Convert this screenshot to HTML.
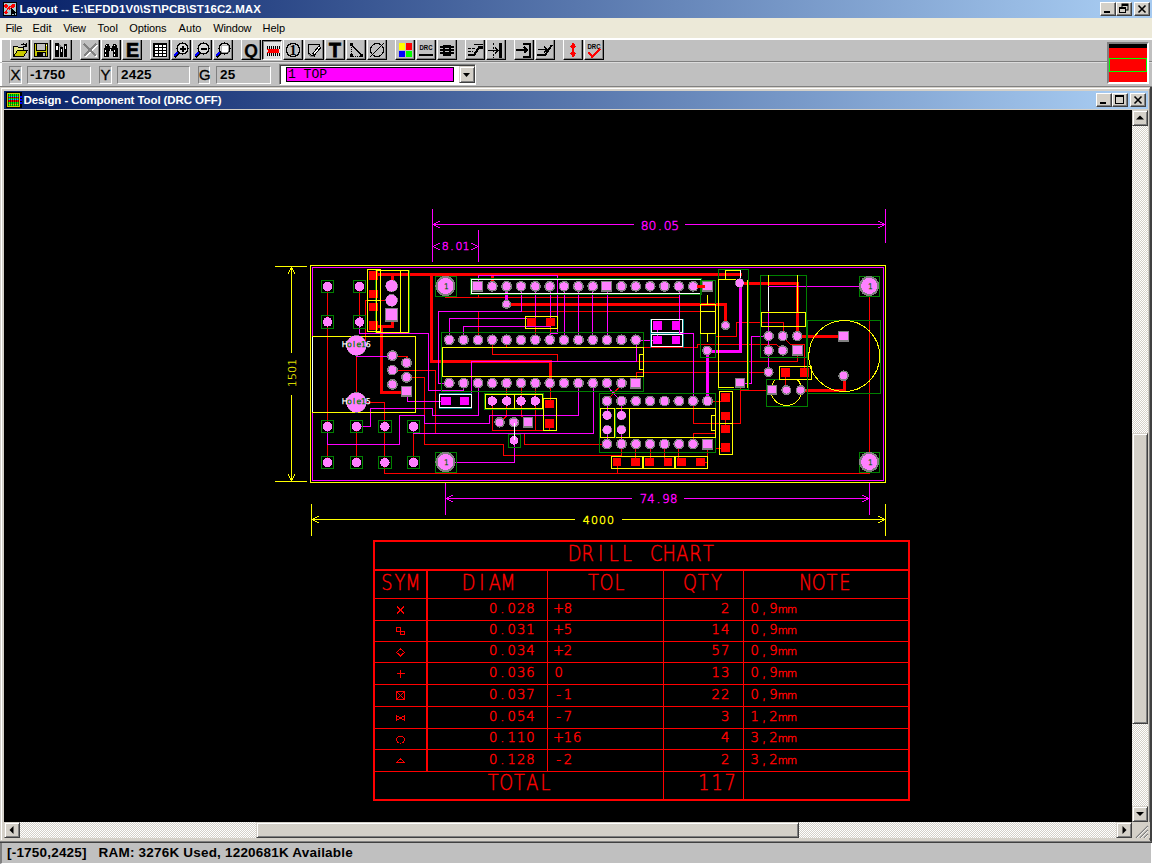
<!DOCTYPE html><html><head><meta charset="utf-8"><title>Layout</title><style>
*{box-sizing:border-box}
html,body{margin:0;padding:0}
body{width:1152px;height:864px;position:relative;overflow:hidden;background:#c0c0c0;font-family:"Liberation Sans",sans-serif;}
.abs{position:absolute}
#title{left:0;top:0;width:1152px;height:18px;background:linear-gradient(90deg,#0a246a 0%,#0a246a 3%,#a6caf0 97%,#a6caf0 100%)}
.ttext{position:absolute;color:#fff;font-weight:bold;font-size:11.5px;white-space:nowrap;line-height:14px}
.wb{position:absolute;width:16px;height:14px;background:#d4d0c8;border:1px solid;border-color:#fff #404040 #404040 #fff;box-shadow:inset -1px -1px 0 #808080}
.wb svg{position:absolute;left:0;top:0}
#menu{left:0;top:18px;width:1152px;height:20px;background:#ece9d8}
#menu span{position:absolute;top:3px;font-size:11px;color:#000;white-space:nowrap;line-height:14px}
#tbar{left:0;top:38px;width:1152px;height:24px;background:#c0c0c0;border-top:2px solid #fff;border-left:2px solid #fff}
.tb{position:absolute;top:40px;width:20px;height:20px;background:#c0c0c0;border-left:1px solid #fff;border-right:1px solid #000;border-bottom:1px solid #000;box-shadow:inset -1px -1px 0 #808080}
.tb.dn{background:#e0e0e0;border:none;border-left:1px solid #000;border-top:1px solid #000;border-right:1px solid #fff;border-bottom:1px solid #fff;box-shadow:inset 1px 1px 0 #808080}
.tb svg{position:absolute;left:-1px;top:0;shape-rendering:crispEdges}
.tb.dn svg{left:0;top:0}
#sep1{left:2px;top:61px;width:1150px;height:1px;background:#808080}
#sep1b{left:2px;top:62px;width:1150px;height:1px;background:#dcdcdc}
#cbar{left:0;top:63px;width:1152px;height:23px;background:#c0c0c0;border-left:2px solid #fff}
.sunk{position:absolute;top:66px;height:18px;border:1px solid;border-color:#808080 #fff #fff #808080;font-weight:bold;font-size:13.5px;letter-spacing:0.2px;line-height:16px;color:#000;white-space:nowrap}
#status{left:0;top:843px;width:1152px;height:21px;background:#c0c0c0;border-left:2px solid #808080;border-bottom:1px solid #fff;border-right:1px solid #fff}
#status span{position:absolute;left:5px;top:2px;font-weight:bold;font-size:13.5px;letter-spacing:0.2px;line-height:16px;white-space:pre;color:#000}
.sb{background-color:#fff;background-image:linear-gradient(45deg,#d4d0c8 25%,transparent 25%,transparent 75%,#d4d0c8 75%),linear-gradient(45deg,#d4d0c8 25%,transparent 25%,transparent 75%,#d4d0c8 75%);background-size:2px 2px;background-position:0 0,1px 1px}
.sbtn{position:absolute;background:#d4d0c8;border:1px solid;border-color:#d4d0c8 #404040 #404040 #d4d0c8;box-shadow:inset 1px 1px 0 #fff,inset -1px -1px 0 #808080}
</style></head><body>
<div id="title" class="abs"></div><svg class="abs" style="left:3px;top:2px" width="14" height="14" viewBox="0 0 14 14" shape-rendering="crispEdges"><rect x="0" y="0" width="14" height="14" fill="#000"/><rect x="1" y="1" width="12" height="12" fill="#a8c8d0"/><path d="M3,10 L6,5 L10,3" stroke="#ff0000" stroke-width="1" fill="none"/><circle cx="3" cy="4" r="1.8" fill="#ff0000"/><circle cx="10" cy="4" r="2" fill="#ff0000"/><circle cx="3" cy="10.5" r="1.8" fill="#ff0000"/><circle cx="6.5" cy="6.5" r="1.3" fill="#ff0000"/><path d="M8,6 v7 l2,-2 l1.5,2.5 l1,-0.5 l-1.5,-2.5 h2.5 z" fill="#000"/></svg><div class="ttext" id="t1" style="left:19.5px;top:2px;letter-spacing:0.1px">Layout -- E:\EFDD1V0\ST\PCB\ST16C2.MAX</div><div class="wb" style="left:1100px;top:2px"><svg width="14" height="12"><rect x="3" y="8" width="6" height="2" fill="#000"/></svg></div><div class="wb" style="left:1116px;top:2px"><svg width="14" height="12"><rect x="5" y="1" width="6" height="6" fill="none" stroke="#000"/><rect x="5" y="1" width="6" height="2" fill="#000"/><rect x="2.5" y="4.5" width="6" height="5" fill="#d4d0c8" stroke="#000"/><rect x="2" y="4" width="7" height="2" fill="#000"/></svg></div><div class="wb" style="left:1134px;top:2px"><svg width="14" height="12"><path d="M3.5,2.5 L10.5,9.5 M10.5,2.5 L3.5,9.5" stroke="#000" stroke-width="1.6"/></svg></div><div id="menu" class="abs"><span style="left:5.4px;letter-spacing:-0.28px">File</span><span style="left:32.4px;letter-spacing:0.1px">Edit</span><span style="left:63.2px;letter-spacing:-0.29px">View</span><span style="left:97.6px;letter-spacing:0.08px">Tool</span><span style="left:129.3px;letter-spacing:-0.12px">Options</span><span style="left:178.6px;letter-spacing:0.06px">Auto</span><span style="left:213.2px;letter-spacing:-0.15px">Window</span><span style="left:262.5px;letter-spacing:0px">Help</span></div><div id="tbar" class="abs"></div><div class="tb" style="left:10px"><svg width="20" height="20" viewBox="0 0 20 20"><path d="M3.5,16.5 V6.5 H7.5 L8.5,7.5 H13.5 V10" fill="#e6e68c" stroke="#000"/><path d="M3.5,16.5 L7.5,10.5 H17.5 L13.5,16.5 Z" fill="#c8c800" stroke="#000"/><path d="M10.5,5.5 Q13,2.5 16,5.5" fill="none" stroke="#000" stroke-width="1.2"/><path d="M16.5,3 V6.5 H13" fill="none" stroke="#000" stroke-width="1.2"/></svg></div><div class="tb" style="left:31px"><svg width="20" height="20" viewBox="0 0 20 20"><rect x="3.5" y="3.5" width="13" height="13" fill="#c8c800" stroke="#000"/><rect x="6" y="4" width="8" height="6" fill="#c0c0c0"/><path d="M5.5,4 V10.5 H14.5 V4" fill="none" stroke="#000"/><rect x="6" y="12" width="9" height="4" fill="#000"/><rect x="12" y="13" width="2" height="3" fill="#c0c0c0"/><rect x="15" y="5" width="1" height="1" fill="#fff"/></svg></div><div class="tb" style="left:52px"><svg width="20" height="20" viewBox="0 0 20 20"><rect x="3" y="3" width="4" height="14" fill="#000"/><rect x="4" y="6" width="2" height="4" fill="#fff"/><path d="M7,3 L10,7 H7 Z" fill="#808080"/><rect x="8" y="7" width="3" height="10" fill="#000"/><rect x="9" y="9" width="1" height="3" fill="#fff"/><rect x="12" y="4" width="3" height="13" fill="#000"/><rect x="13" y="6" width="1" height="3" fill="#fff"/></svg></div><div class="tb" style="left:80px"><svg width="20" height="20" viewBox="0 0 20 20"><path d="M5,5 L17,17 M17,5 L5,17" stroke="#fff" stroke-width="1.6"/><path d="M4,4 L16,16 M16,4 L4,16" stroke="#808080" stroke-width="2"/></svg></div><div class="tb" style="left:101px"><svg width="20" height="20" viewBox="0 0 20 20"><path d="M3,17 V9 L5,4 H8 L9,8 H11 L12,4 H15 L17,9 V17 H12 V11 H8 V17 Z" fill="#000"/><rect x="5" y="5" width="1" height="1" fill="#fff"/><rect x="13" y="5" width="1" height="1" fill="#fff"/><rect x="4" y="10" width="1" height="2" fill="#fff"/><rect x="4" y="14" width="1" height="2" fill="#fff"/><rect x="9" y="9" width="1" height="2" fill="#fff"/><rect x="13" y="10" width="1" height="2" fill="#fff"/><rect x="13" y="14" width="1" height="2" fill="#fff"/></svg></div><div class="tb" style="left:122px"><svg width="20" height="20" viewBox="0 0 20 20"><text x="10.5" y="17" font-family="'Liberation Sans',sans-serif" font-weight="bold" font-size="19.5" text-anchor="middle" fill="#000" stroke="#000" stroke-width="0.7">E</text></svg></div><div class="tb" style="left:150px"><svg width="20" height="20" viewBox="0 0 20 20"><rect x="3" y="3" width="14" height="14" fill="#000"/><rect x="5" y="5" width="3" height="2" fill="#fff"/><rect x="5" y="8" width="3" height="2" fill="#fff"/><rect x="5" y="11" width="3" height="2" fill="#fff"/><rect x="5" y="14" width="3" height="2" fill="#fff"/><rect x="9" y="5" width="3" height="2" fill="#fff"/><rect x="9" y="8" width="3" height="2" fill="#fff"/><rect x="9" y="11" width="3" height="2" fill="#fff"/><rect x="9" y="14" width="3" height="2" fill="#fff"/><rect x="13" y="5" width="3" height="2" fill="#fff"/><rect x="13" y="8" width="3" height="2" fill="#fff"/><rect x="13" y="11" width="3" height="2" fill="#fff"/><rect x="13" y="14" width="3" height="2" fill="#fff"/></svg></div><div class="tb" style="left:171px"><svg width="20" height="20" viewBox="0 0 20 20"><path d="M3.5,17 L7.5,13" stroke="#000" stroke-width="3"/><path d="M3,16 L7,12" stroke="#0000ff" stroke-width="1.8"/><circle cx="11.5" cy="8.5" r="5.5" fill="#d8d8d8" stroke="#000" stroke-width="1.3"/><path d="M8.5,8.5 h6 M11.5,5.5 v6" stroke="#000" stroke-width="2"/></svg></div><div class="tb" style="left:192px"><svg width="20" height="20" viewBox="0 0 20 20"><path d="M3.5,17 L7.5,13" stroke="#000" stroke-width="3"/><path d="M3,16 L7,12" stroke="#0000ff" stroke-width="1.8"/><circle cx="11.5" cy="8.5" r="5.5" fill="#d8d8d8" stroke="#000" stroke-width="1.3"/><path d="M8.5,8.5 h6" stroke="#000" stroke-width="2"/></svg></div><div class="tb" style="left:213px"><svg width="20" height="20" viewBox="0 0 20 20"><path d="M3.5,17 L7.5,13" stroke="#000" stroke-width="3"/><path d="M3,16 L7,12" stroke="#0000ff" stroke-width="1.8"/><circle cx="11.5" cy="8.5" r="5.5" fill="#d8d8d8" stroke="#000" stroke-width="1.3"/><rect x="8" y="5" width="7" height="7" fill="#fff" stroke="#808080" stroke-width="0.6"/></svg></div><div class="tb" style="left:241px"><svg width="20" height="20" viewBox="0 0 20 20"><text x="10" y="16.5" font-family="'Liberation Sans',sans-serif" font-weight="bold" font-size="17.5" text-anchor="middle" fill="#000" stroke="#000" stroke-width="0.25">Q</text></svg></div><div class="tb dn" style="left:262px"><svg width="20" height="20" viewBox="0 0 20 20"><rect x="4" y="8" width="12" height="4" fill="#ff0000"/><rect x="4" y="9" width="1" height="2" fill="#e0e0e0"/><rect x="4" y="5" width="1" height="3" fill="#000"/><rect x="4" y="12" width="1" height="3" fill="#000"/><rect x="6" y="5" width="1" height="3" fill="#000"/><rect x="6" y="12" width="1" height="3" fill="#000"/><rect x="8" y="5" width="1" height="3" fill="#000"/><rect x="8" y="12" width="1" height="3" fill="#000"/><rect x="10" y="5" width="1" height="3" fill="#000"/><rect x="10" y="12" width="1" height="3" fill="#000"/><rect x="12" y="5" width="1" height="3" fill="#000"/><rect x="12" y="12" width="1" height="3" fill="#000"/><rect x="14" y="5" width="1" height="3" fill="#000"/><rect x="14" y="12" width="1" height="3" fill="#000"/><rect x="16" y="5" width="1" height="3" fill="#000"/><rect x="16" y="12" width="1" height="3" fill="#000"/></svg></div><div class="tb" style="left:283px"><svg width="20" height="20" viewBox="0 0 20 20"><circle cx="10" cy="10" r="6.6" fill="none" stroke="#000" stroke-width="1.3"/><text x="10" y="15" font-family="'Liberation Serif',serif" font-weight="bold" font-size="14" text-anchor="middle" fill="#000">1</text></svg></div><div class="tb" style="left:304px"><svg width="20" height="20" viewBox="0 0 20 20"><path d="M4,4.5 H15.5 V8" fill="none" stroke="#000" stroke-width="1.3"/><path d="M4.5,4 V13 L7,16 H10 L10.5,13" fill="none" stroke="#000" stroke-width="1.3"/><path d="M5,14 L7,16.5 H10" stroke="#808080" stroke-width="1.5" fill="none"/><path d="M9.5,14.5 L16,6.5" stroke="#000" stroke-width="3.4"/><path d="M10,14 L15.6,7" stroke="#fff" stroke-width="1.2"/></svg></div><div class="tb" style="left:325px"><svg width="20" height="20" viewBox="0 0 20 20"><text x="10" y="17" font-family="'Liberation Sans',sans-serif" font-weight="bold" font-size="19.5" text-anchor="middle" fill="#000" stroke="#000" stroke-width="0.8">T</text></svg></div><div class="tb" style="left:346px"><svg width="20" height="20" viewBox="0 0 20 20"><path d="M5.5,5 v11 h10" stroke="#000" stroke-dasharray="1,1" fill="none"/><path d="M5.5,5 L15.5,15" stroke="#000" stroke-width="1.6"/><rect x="4" y="3" width="3" height="3" fill="#000"/><rect x="4" y="14" width="3" height="3" fill="#000"/><rect x="14" y="14" width="3" height="3" fill="#000"/></svg></div><div class="tb" style="left:367px"><svg width="20" height="20" viewBox="0 0 20 20"><circle cx="10" cy="10" r="6.5" fill="none" stroke="#000" stroke-width="1.2"/><path d="M3,17 L17,3" stroke="#000" stroke-width="1.2"/></svg></div><div class="tb" style="left:395px"><svg width="20" height="20" viewBox="0 0 20 20"><rect x="4" y="3" width="6" height="7" fill="#ffff00"/><rect x="11" y="3" width="6" height="7" fill="#ff0000"/><rect x="4" y="11" width="6" height="6" fill="#0000ff"/><rect x="11" y="11" width="6" height="6" fill="#00ff00"/></svg></div><div class="tb" style="left:416px"><svg width="20" height="20" viewBox="0 0 20 20"><text x="3.5" y="10" font-family="'Liberation Sans',sans-serif" font-weight="bold" font-size="7.2" textLength="13" lengthAdjust="spacingAndGlyphs" fill="#000">DRC</text><rect x="3" y="14" width="14" height="2" fill="#000"/></svg></div><div class="tb" style="left:437px"><svg width="20" height="20" viewBox="0 0 20 20"><rect x="6" y="5" width="8" height="11" fill="#000"/><rect x="3" y="6" width="14" height="2" fill="#000"/><rect x="3" y="9" width="14" height="2" fill="#000"/><rect x="3" y="12" width="14" height="2" fill="#000"/><rect x="8" y="8" width="4" height="1" fill="#c0c0c0"/><rect x="8" y="11" width="4" height="1" fill="#c0c0c0"/></svg></div><div class="tb" style="left:465px"><svg width="20" height="20" viewBox="0 0 20 20"><path d="M3,15 H9 L14,7.5 H18" stroke="#000" stroke-width="2.2" fill="none"/><path d="M3,8.5 h7 M3,11.5 h5" stroke="#000" stroke-width="1.6" stroke-dasharray="3,1" fill="none"/><path d="M9,4.5 h9" stroke="#000" stroke-width="1.8"/></svg></div><div class="tb" style="left:486px"><svg width="20" height="20" viewBox="0 0 20 20"><path d="M7.5,3 v15" stroke="#000" stroke-dasharray="2,1.5" stroke-width="1.2"/><path d="M14.5,3 v15" stroke="#000" stroke-width="2.4"/><path d="M2,10.5 h10 M9,7.5 l3,3 l-3,3" stroke="#000" stroke-width="1.8" fill="none"/></svg></div><div class="tb" style="left:514px"><svg width="20" height="20" viewBox="0 0 20 20"><path d="M9,4 h7 v12.5 h-7" stroke="#000" stroke-width="2" fill="none"/><path d="M2,10 h11 M10,7 l3,3 l-3,3" stroke="#000" stroke-width="1.8" fill="none"/></svg></div><div class="tb" style="left:535px"><svg width="20" height="20" viewBox="0 0 20 20"><path d="M2,15 h8 L17,5" stroke="#000" stroke-width="2" fill="none"/><path d="M3,9.5 h9 M9,6.5 l3,3 l-3,3" stroke="#000" stroke-width="1.8" fill="none"/></svg></div><div class="tb" style="left:563px"><svg width="20" height="20" viewBox="0 0 20 20"><path d="M10,2.5 L13,6.5 L10,10 L13,13.5 L10,17.5 L7,13.5 L10,10 L7,6.5 Z" fill="#ff0000"/><rect x="9" y="4" width="2" height="12" fill="#ff0000"/></svg></div><div class="tb" style="left:584px"><svg width="20" height="20" viewBox="0 0 20 20"><text x="3.5" y="8.5" font-family="'Liberation Sans',sans-serif" font-weight="bold" font-size="7.2" textLength="13" lengthAdjust="spacingAndGlyphs" fill="#000">DRC</text><path d="M4.5,12.5 l3.5,4 l8.5,-7.5" stroke="#ff0000" stroke-width="2.2" fill="none"/></svg></div><div id="sep1" class="abs"></div><div id="sep1b" class="abs"></div><div id="cbar" class="abs"></div><div class="sunk" style="left:9px;width:13px;font-size:15px;font-weight:normal;letter-spacing:0;padding-left:0.5px;-webkit-text-stroke:0.3px #000">X</div><div class="sunk" style="left:27px;width:64px;padding-left:2px">-1750</div><div class="sunk" style="left:99px;width:13px;font-size:15px;font-weight:normal;letter-spacing:0;padding-left:0.5px;-webkit-text-stroke:0.3px #000">Y</div><div class="sunk" style="left:117px;width:73px;padding-left:3px">2425</div><div class="sunk" style="left:198px;width:12px;font-size:15px;font-weight:normal;letter-spacing:0;padding-left:0px;-webkit-text-stroke:0.3px #000">G</div><div class="sunk" style="left:216px;width:55px;padding-left:3px">25</div><div class="abs" style="left:279px;top:64px;width:197px;height:21px;background:#fff;border:1px solid;border-color:#808080 #fff #fff #808080;box-shadow:inset 1px 1px 0 #404040"></div><div class="abs" style="left:286px;top:67px;width:168px;height:15px;background:#ff00ff;border:1px solid #000;font-family:'Liberation Mono',monospace;font-size:13px;line-height:13px;color:#000;padding-left:1px;white-space:pre">1 TOP</div><div class="sbtn" style="left:459px;top:66px;width:16px;height:17px"><svg width="14" height="15"><path d="M3,6 h7 l-3.5,4 z" fill="#000"/></svg></div><div class="abs" style="left:1107px;top:42px;width:42px;height:42px;border:2px solid;border-color:#808080 #fff #fff #808080;background:#ff0000"><div class="abs" style="left:0;top:0;width:38px;height:4px;background:#000"></div><div class="abs" style="left:0;top:14px;width:38px;height:14px;border:1px solid #00ff00"></div></div><div class="abs" style="left:0;top:86px;width:1152px;height:1px;background:#808080"></div><div class="abs" style="left:0;top:87px;width:1152px;height:755px;background:#d4d0c8;border-right:2px solid #404040;border-bottom:1px solid #808080"></div><div class="abs" style="left:1px;top:88px;width:1149px;height:752px;border-left:1px solid #fff;border-top:1px solid #fff;border-right:1px solid #808080;"></div><div class="abs" style="left:0;top:842px;width:1152px;height:1px;background:#404040"></div><div class="abs" style="left:4px;top:91px;width:1144px;height:18px;background:linear-gradient(90deg,#0a246a 0%,#0a246a 3%,#a6caf0 97%,#a6caf0 100%)"></div><svg class="abs" style="left:6px;top:92px" width="16" height="16" viewBox="0 0 16 16" shape-rendering="crispEdges"><rect width="16" height="16" fill="#000"/><rect x="1" y="1" width="13" height="14" fill="#c8c800"/><rect x="2" y="2" width="11" height="1" fill="#00ff00"/><rect x="2" y="3" width="11" height="1" fill="#00ff00"/><rect x="2" y="4" width="11" height="1" fill="#00c0ff"/><rect x="2" y="5" width="11" height="1" fill="#ff0000"/><rect x="2" y="6" width="11" height="1" fill="#00ff00"/><rect x="2" y="7" width="11" height="1" fill="#00c0ff"/><rect x="2" y="8" width="11" height="1" fill="#ff0000"/><rect x="2" y="9" width="11" height="1" fill="#ff0000"/><rect x="2" y="10" width="11" height="1" fill="#00ff00"/><rect x="2" y="11" width="11" height="1" fill="#00ff00"/><rect x="2" y="12" width="11" height="1" fill="#c8c800"/><rect x="2" y="13" width="11" height="1" fill="#00ff00"/><rect x="2" y="2" width="1" height="12" fill="#000" opacity="0.55"/><rect x="4" y="2" width="1" height="12" fill="#000" opacity="0.55"/><rect x="6" y="2" width="1" height="12" fill="#000" opacity="0.55"/><rect x="8" y="2" width="1" height="12" fill="#000" opacity="0.55"/><rect x="10" y="2" width="1" height="12" fill="#000" opacity="0.55"/><rect x="12" y="2" width="1" height="12" fill="#000" opacity="0.55"/><rect x="14" y="4" width="2" height="2" fill="#0000ff"/><rect x="14" y="7" width="2" height="2" fill="#0000ff"/><rect x="14" y="10" width="2" height="2" fill="#0000ff"/></svg><div class="ttext" id="t2" style="left:23.5px;top:93px;letter-spacing:-0.09px">Design - Component Tool (DRC OFF)</div><div class="wb" style="left:1096px;top:93px"><svg width="14" height="12"><rect x="3" y="8" width="6" height="2" fill="#000"/></svg></div><div class="wb" style="left:1112px;top:93px"><svg width="14" height="12"><rect x="2.5" y="1.5" width="8" height="8" fill="none" stroke="#000"/><rect x="2" y="1" width="9" height="2" fill="#000"/></svg></div><div class="wb" style="left:1130px;top:93px"><svg width="14" height="12"><path d="M3.5,2.5 L10.5,9.5 M10.5,2.5 L3.5,9.5" stroke="#000" stroke-width="1.6"/></svg></div><svg class="abs" style="left:4px;top:110px;background:#000" width="1128" height="712" viewBox="4 110 1128 712" shape-rendering="crispEdges" text-rendering="optimizeSpeed">
<rect x="310.5" y="265.5" width="575" height="217" stroke="#ffff00" stroke-width="1" fill="none"/>
<rect x="312.5" y="267.5" width="571" height="213" stroke="#ff00ff" stroke-width="1" fill="none"/>
<polyline points="377.5,274.5 740.5,274.5" stroke="#ff0000" stroke-width="3" fill="none" stroke-linecap="square"/>
<polyline points="392.5,274.5 392.5,281.5" stroke="#ff0000" stroke-width="3" fill="none" stroke-linecap="square"/>
<polyline points="431.5,274.5 431.5,361.5 550.5,361.5 550.5,381.5" stroke="#ff0000" stroke-width="3" fill="none" stroke-linecap="square"/>
<polyline points="550.5,383.5 550.5,400.5" stroke="#ff0000" stroke-width="1" fill="none" stroke-linecap="square"/>
<polyline points="392.5,320.5 392.5,326.5 377.5,326.5" stroke="#ff0000" stroke-width="3" fill="none" stroke-linecap="square"/>
<polyline points="381.5,326.5 381.5,392.5 403.5,392.5" stroke="#ff0000" stroke-width="3" fill="none" stroke-linecap="square"/>
<polyline points="508.5,304.5 725.5,304.5 725.5,322.5" stroke="#ff0000" stroke-width="3" fill="none" stroke-linecap="square"/>
<polyline points="743.5,283.5 797.5,283.5 797.5,333.5" stroke="#ff0000" stroke-width="3" fill="none" stroke-linecap="square"/>
<polyline points="800.5,336.5 840.5,336.5" stroke="#ff0000" stroke-width="3" fill="none" stroke-linecap="square"/>
<polyline points="844.5,378.5 844.5,390.5 803.5,390.5" stroke="#ff0000" stroke-width="3" fill="none" stroke-linecap="square"/>
<polyline points="492.5,275.5 492.5,283.5" stroke="#ff0000" stroke-width="3" fill="none" stroke-linecap="square"/>
<polyline points="327.5,286.5 327.5,462.5" stroke="#ff0000" stroke-width="1" fill="none" stroke-linecap="square"/>
<polyline points="359.5,286.5 359.5,321.5" stroke="#ff0000" stroke-width="1" fill="none" stroke-linecap="square"/>
<polyline points="356.5,356.5 356.5,393.5" stroke="#ff0000" stroke-width="1" fill="none" stroke-linecap="square"/>
<polyline points="356.5,426.5 356.5,462.5" stroke="#ff0000" stroke-width="1" fill="none" stroke-linecap="square"/>
<polyline points="366.5,402.5 384.5,402.5 384.5,473.5 869.5,473.5 869.5,465.5" stroke="#ff0000" stroke-width="1" fill="none" stroke-linecap="square"/>
<polyline points="445.5,468.5 445.5,473.5" stroke="#ff0000" stroke-width="1" fill="none" stroke-linecap="square"/>
<polyline points="413.5,426.5 413.5,462.5" stroke="#ff0000" stroke-width="1" fill="none" stroke-linecap="square"/>
<polyline points="406.5,377.5 424.5,377.5 424.5,444.5 503.5,444.5 503.5,455.5 621.5,455.5 621.5,447.5" stroke="#ff0000" stroke-width="1" fill="none" stroke-linecap="square"/>
<polyline points="392.5,370.5 435.5,370.5 435.5,432.5" stroke="#ff0000" stroke-width="1" fill="none" stroke-linecap="square"/>
<polyline points="392.5,356.5 407.5,356.5 407.5,360.5" stroke="#ff0000" stroke-width="1" fill="none" stroke-linecap="square"/>
<polyline points="386.5,300.5 365.5,300.5 365.5,341.5" stroke="#ff0000" stroke-width="1" fill="none" stroke-linecap="square"/>
<polyline points="445.5,294.5 445.5,297.5 678.5,297.5" stroke="#ff0000" stroke-width="1" fill="none" stroke-linecap="square"/>
<polyline points="478.5,293.5 478.5,297.5" stroke="#ff0000" stroke-width="1" fill="none" stroke-linecap="square"/>
<polyline points="478.5,311.5 478.5,334.5" stroke="#ff0000" stroke-width="1" fill="none" stroke-linecap="square"/>
<polyline points="521.5,311.5 700.5,311.5" stroke="#ff0000" stroke-width="1" fill="none" stroke-linecap="square"/>
<polyline points="492.5,344.5 492.5,354.5 557.5,354.5 557.5,361.5" stroke="#ff0000" stroke-width="1" fill="none" stroke-linecap="square"/>
<polyline points="506.5,344.5 506.5,347.5" stroke="#ff0000" stroke-width="1" fill="none" stroke-linecap="square"/>
<polyline points="535.5,326.5 535.5,336.5" stroke="#ff0000" stroke-width="1" fill="none" stroke-linecap="square"/>
<polyline points="550.5,326.5 550.5,334.5" stroke="#ff0000" stroke-width="1" fill="none" stroke-linecap="square"/>
<polyline points="506.5,387.5 506.5,396.5" stroke="#ff0000" stroke-width="1" fill="none" stroke-linecap="square"/>
<polyline points="521.5,387.5 521.5,396.5" stroke="#ff0000" stroke-width="1" fill="none" stroke-linecap="square"/>
<polyline points="535.5,387.5 535.5,396.5" stroke="#ff0000" stroke-width="1" fill="none" stroke-linecap="square"/>
<polyline points="492.5,405.5 492.5,430.5 543.5,430.5" stroke="#ff0000" stroke-width="1" fill="none" stroke-linecap="square"/>
<polyline points="535.5,405.5 535.5,430.5" stroke="#ff0000" stroke-width="1" fill="none" stroke-linecap="square"/>
<polyline points="506.5,405.5 506.5,416.5" stroke="#ff0000" stroke-width="1" fill="none" stroke-linecap="square"/>
<line x1="506.65" y1="416" x2="501" y2="421" stroke="#ff0000" stroke-width="1"/>
<polyline points="521.5,405.5 521.5,415.5" stroke="#ff0000" stroke-width="1" fill="none" stroke-linecap="square"/>
<line x1="521" y1="415.4" x2="527" y2="421" stroke="#ff0000" stroke-width="1"/>
<polyline points="524.5,434.5 524.5,444.5 602.5,444.5" stroke="#ff0000" stroke-width="1" fill="none" stroke-linecap="square"/>
<polyline points="549.5,427.5 549.5,430.5" stroke="#ff0000" stroke-width="1" fill="none" stroke-linecap="square"/>
<polyline points="643.5,347.5 697.5,347.5 697.5,344.5 776.5,344.5" stroke="#ff0000" stroke-width="1" fill="none" stroke-linecap="square"/>
<line x1="776.5" y1="344.4" x2="782" y2="350" stroke="#ff0000" stroke-width="1"/>
<polyline points="637.5,361.5 797.5,361.5 797.5,355.5" stroke="#ff0000" stroke-width="1" fill="none" stroke-linecap="square"/>
<polyline points="636.5,379.5 636.5,372.5 763.5,372.5" stroke="#ff0000" stroke-width="1" fill="none" stroke-linecap="square"/>
<polyline points="715.5,336.5 736.5,336.5 736.5,322.5 783.5,322.5 783.5,332.5" stroke="#ff0000" stroke-width="1" fill="none" stroke-linecap="square"/>
<line x1="786" y1="340" x2="791.2" y2="344.9" stroke="#ff0000" stroke-width="1"/>
<polyline points="791.5,344.5 804.5,344.5 804.5,368.5" stroke="#ff0000" stroke-width="1" fill="none" stroke-linecap="square"/>
<polyline points="785.5,376.5 785.5,386.5" stroke="#ff0000" stroke-width="1" fill="none" stroke-linecap="square"/>
<polyline points="740.5,387.5 740.5,423.5 693.5,423.5 693.5,405.5" stroke="#ff0000" stroke-width="1" fill="none" stroke-linecap="square"/>
<polyline points="740.5,390.5 768.5,390.5" stroke="#ff0000" stroke-width="1" fill="none" stroke-linecap="square"/>
<polyline points="693.5,440.5 693.5,433.5 715.5,433.5 715.5,448.5 721.5,448.5" stroke="#ff0000" stroke-width="1" fill="none" stroke-linecap="square"/>
<polyline points="711.5,401.5 721.5,401.5" stroke="#ff0000" stroke-width="1" fill="none" stroke-linecap="square"/>
<polyline points="725.5,419.5 725.5,425.5" stroke="#ff0000" stroke-width="1" fill="none" stroke-linecap="square"/>
<polyline points="635.5,448.5 635.5,458.5" stroke="#ff0000" stroke-width="1" fill="none" stroke-linecap="square"/>
<polyline points="650.5,448.5 650.5,458.5" stroke="#ff0000" stroke-width="1" fill="none" stroke-linecap="square"/>
<polyline points="664.5,448.5 664.5,458.5" stroke="#ff0000" stroke-width="1" fill="none" stroke-linecap="square"/>
<polyline points="678.5,448.5 678.5,458.5" stroke="#ff0000" stroke-width="1" fill="none" stroke-linecap="square"/>
<polyline points="707.5,449.5 707.5,462.5 704.5,462.5" stroke="#ff0000" stroke-width="1" fill="none" stroke-linecap="square"/>
<polyline points="617.5,466.5 617.5,473.5" stroke="#ff0000" stroke-width="1" fill="none" stroke-linecap="square"/>
<polyline points="869.5,295.5 869.5,453.5" stroke="#ff0000" stroke-width="1" fill="none" stroke-linecap="square"/>
<line x1="619" y1="387.5" x2="609.5" y2="397.5" stroke="#ff0000" stroke-width="1"/>
<polyline points="359.5,321.5 359.5,333.5 428.5,333.5 428.5,390.5 463.5,390.5 463.5,386.5" stroke="#ff00ff" stroke-width="1" fill="none" stroke-linecap="square"/>
<polyline points="356.5,356.5 388.5,356.5" stroke="#ff00ff" stroke-width="1" fill="none" stroke-linecap="square"/>
<polyline points="521.5,289.5 521.5,311.5 438.5,311.5 438.5,383.5 446.5,383.5" stroke="#ff00ff" stroke-width="1" fill="none" stroke-linecap="square"/>
<polyline points="526.5,318.5 449.5,318.5 449.5,336.5" stroke="#ff00ff" stroke-width="1" fill="none" stroke-linecap="square"/>
<polyline points="550.5,326.5 463.5,326.5 463.5,336.5" stroke="#ff00ff" stroke-width="1" fill="none" stroke-linecap="square"/>
<polyline points="478.5,282.5 478.5,275.5 557.5,275.5 557.5,333.5 550.5,333.5 550.5,337.5" stroke="#ff00ff" stroke-width="1" fill="none" stroke-linecap="square"/>
<polyline points="564.5,289.5 564.5,337.5" stroke="#ff00ff" stroke-width="1" fill="none" stroke-linecap="square"/>
<polyline points="578.5,289.5 578.5,337.5" stroke="#ff00ff" stroke-width="1" fill="none" stroke-linecap="square"/>
<polyline points="592.5,289.5 592.5,337.5" stroke="#ff00ff" stroke-width="1" fill="none" stroke-linecap="square"/>
<polyline points="607.5,289.5 607.5,337.5" stroke="#ff00ff" stroke-width="1" fill="none" stroke-linecap="square"/>
<polyline points="535.5,289.5 535.5,318.5" stroke="#ff00ff" stroke-width="1" fill="none" stroke-linecap="square"/>
<polyline points="550.5,289.5 550.5,326.5" stroke="#ff00ff" stroke-width="1" fill="none" stroke-linecap="square"/>
<polyline points="471.5,394.5 471.5,361.5 636.5,361.5 636.5,343.5" stroke="#ff00ff" stroke-width="1" fill="none" stroke-linecap="square"/>
<polyline points="639.5,340.5 652.5,340.5" stroke="#ff00ff" stroke-width="1" fill="none" stroke-linecap="square"/>
<polyline points="407.5,396.5 407.5,401.5 441.5,401.5" stroke="#ff00ff" stroke-width="1" fill="none" stroke-linecap="square"/>
<polyline points="356.5,426.5 370.5,426.5 370.5,408.5 432.5,408.5 432.5,415.5 478.5,415.5 478.5,386.5" stroke="#ff00ff" stroke-width="1" fill="none" stroke-linecap="square"/>
<polyline points="327.5,426.5 327.5,444.5 399.5,444.5 399.5,415.5 424.5,415.5 424.5,423.5 489.5,423.5 489.5,415.5 578.5,415.5 578.5,386.5" stroke="#ff00ff" stroke-width="1" fill="none" stroke-linecap="square"/>
<polyline points="413.5,426.5 413.5,433.5 593.5,433.5 593.5,386.5" stroke="#ff00ff" stroke-width="1" fill="none" stroke-linecap="square"/>
<polyline points="455.5,462.5 514.5,462.5 514.5,443.5" stroke="#ff00ff" stroke-width="1" fill="none" stroke-linecap="square"/>
<polyline points="679.5,289.5 679.5,333.5 693.5,333.5 693.5,398.5" stroke="#ff00ff" stroke-width="1" fill="none" stroke-linecap="square"/>
<polyline points="744.5,383.5 751.5,383.5 751.5,336.5 765.5,336.5" stroke="#ff00ff" stroke-width="1" fill="none" stroke-linecap="square"/>
<polyline points="768.5,311.5 768.5,368.5" stroke="#ff00ff" stroke-width="1" fill="none" stroke-linecap="square"/>
<polyline points="768.5,286.5 859.5,286.5" stroke="#ff00ff" stroke-width="1" fill="none" stroke-linecap="square"/>
<polyline points="607.5,401.5 607.5,415.5" stroke="#ff00ff" stroke-width="1" fill="none" stroke-linecap="square"/>
<polyline points="607.5,429.5 607.5,444.5" stroke="#ff00ff" stroke-width="1" fill="none" stroke-linecap="square"/>
<polyline points="621.5,401.5 621.5,415.5" stroke="#ff00ff" stroke-width="1" fill="none" stroke-linecap="square"/>
<polyline points="621.5,429.5 621.5,444.5" stroke="#ff00ff" stroke-width="1" fill="none" stroke-linecap="square"/>
<line x1="607.5" y1="386.5" x2="617.5" y2="397.5" stroke="#ff00ff" stroke-width="1"/>
<polyline points="657.5,329.5 657.5,336.5" stroke="#ff00ff" stroke-width="1" fill="none" stroke-linecap="square"/>
<polyline points="506.5,289.5 506.5,301.5" stroke="#ff00ff" stroke-width="3" fill="none" stroke-linecap="square"/>
<polyline points="740.5,286.5 740.5,351.5 710.5,351.5" stroke="#ff00ff" stroke-width="3" fill="none" stroke-linecap="square"/>
<polyline points="707.5,353.5 707.5,398.5" stroke="#ff00ff" stroke-width="3" fill="none" stroke-linecap="square"/>
<rect x="321.5" y="280.5" width="12" height="12" stroke="#008000" stroke-width="1" fill="none"/>
<rect x="353.5" y="280.5" width="12" height="12" stroke="#008000" stroke-width="1" fill="none"/>
<rect x="321.5" y="315.5" width="12" height="13" stroke="#008000" stroke-width="1" fill="none"/>
<rect x="353.5" y="315.5" width="12" height="13" stroke="#008000" stroke-width="1" fill="none"/>
<rect x="321.5" y="420.5" width="12" height="12" stroke="#008000" stroke-width="1" fill="none"/>
<rect x="321.5" y="456.5" width="12" height="12" stroke="#008000" stroke-width="1" fill="none"/>
<rect x="350.5" y="420.5" width="12" height="12" stroke="#008000" stroke-width="1" fill="none"/>
<rect x="350.5" y="456.5" width="12" height="12" stroke="#008000" stroke-width="1" fill="none"/>
<rect x="378.5" y="420.5" width="13" height="12" stroke="#008000" stroke-width="1" fill="none"/>
<rect x="378.5" y="456.5" width="13" height="12" stroke="#008000" stroke-width="1" fill="none"/>
<rect x="407.5" y="420.5" width="12" height="12" stroke="#008000" stroke-width="1" fill="none"/>
<rect x="407.5" y="456.5" width="12" height="12" stroke="#008000" stroke-width="1" fill="none"/>
<rect x="435.5" y="276.5" width="21" height="20" stroke="#008000" stroke-width="1" fill="none"/>
<rect x="859.5" y="276.5" width="20" height="20" stroke="#008000" stroke-width="1" fill="none"/>
<rect x="435.5" y="452.5" width="21" height="20" stroke="#008000" stroke-width="1" fill="none"/>
<rect x="859.5" y="452.5" width="20" height="20" stroke="#008000" stroke-width="1" fill="none"/>
<rect x="375.5" y="270.5" width="34" height="62" stroke="#008000" stroke-width="1" fill="none"/>
<rect x="369" y="271" width="9" height="9" fill="#ff0000"/>
<rect x="369" y="290" width="9" height="8" fill="#ff0000"/>
<rect x="369" y="303" width="9" height="8" fill="#ff0000"/>
<rect x="369" y="321" width="9" height="9" fill="#ff0000"/>
<rect x="367.5" y="269.5" width="13" height="62" stroke="#ffff00" stroke-width="1" fill="none"/>
<polyline points="367.5,300.5 380.5,300.5" stroke="#ffff00" stroke-width="1" fill="none" stroke-linecap="square"/>
<rect x="376.5" y="270.5" width="32" height="62" stroke="#ffff00" stroke-width="1" fill="none"/>
<polyline points="400.5,270.5 400.5,332.5" stroke="#ffff00" stroke-width="1" fill="none" stroke-linecap="square"/>
<rect x="312.5" y="336.5" width="103" height="76" stroke="#ffff00" stroke-width="1" fill="none"/>
<polyline points="312.5,337.5 312.5,411.5" stroke="#ffffff" stroke-width="1" fill="none" stroke-linecap="square"/>
<rect x="441.5" y="332.5" width="202" height="59" stroke="#008000" stroke-width="1" fill="none"/>
<rect x="442.5" y="347.5" width="201" height="29" stroke="#ffff00" stroke-width="1" fill="none"/>
<rect x="639.5" y="354.5" width="4" height="15" stroke="#ffff00" stroke-width="1" fill="none"/>
<rect x="527" y="318" width="9" height="8" fill="#ff0000"/>
<rect x="546" y="318" width="9" height="8" fill="#ff0000"/>
<rect x="525.5" y="316.5" width="32" height="12" stroke="#ffff00" stroke-width="1" fill="none"/>
<rect x="470.5" y="278.5" width="231" height="16" stroke="#008000" stroke-width="1" fill="none"/>
<rect x="471.5" y="279.5" width="229" height="14" stroke="#ffffff" stroke-width="1" fill="none"/>
<polyline points="650.5,319.5 650.5,347.5" stroke="#008080" stroke-width="1" fill="none" stroke-linecap="square"/>
<polyline points="683.5,319.5 683.5,347.5" stroke="#008080" stroke-width="1" fill="none" stroke-linecap="square"/>
<polyline points="650.5,333.5 683.5,333.5" stroke="#008080" stroke-width="1" fill="none" stroke-linecap="square"/>
<rect x="651.5" y="319.5" width="31" height="13" stroke="#ffffff" stroke-width="1" fill="none"/>
<rect x="651.5" y="334.5" width="31" height="12" stroke="#ffffff" stroke-width="1" fill="none"/>
<rect x="653" y="321" width="9" height="9" fill="#ff00ff"/>
<rect x="672" y="321" width="8" height="9" fill="#ff00ff"/>
<rect x="653" y="336" width="9" height="8" fill="#ff00ff"/>
<rect x="672" y="336" width="8" height="8" fill="#ff00ff"/>
<polyline points="679.5,320.5 679.5,333.5 693.5,333.5" stroke="#ff00ff" stroke-width="1" fill="none" stroke-linecap="square"/>
<polyline points="439.5,393.5 471.5,393.5" stroke="#008080" stroke-width="1" fill="none" stroke-linecap="square"/>
<polyline points="439.5,408.5 471.5,408.5" stroke="#008080" stroke-width="1" fill="none" stroke-linecap="square"/>
<rect x="439.5" y="394.5" width="32" height="13" stroke="#ffffff" stroke-width="1" fill="none"/>
<rect x="441" y="397" width="10" height="8" fill="#ff00ff"/>
<rect x="460" y="397" width="9" height="8" fill="#ff00ff"/>
<rect x="484.5" y="393.5" width="59" height="16" stroke="#008000" stroke-width="1" fill="none"/>
<rect x="485.5" y="394.5" width="29" height="14" stroke="#ffff00" stroke-width="1" fill="none"/>
<rect x="514.5" y="394.5" width="28" height="14" stroke="#ffff00" stroke-width="1" fill="none"/>
<rect x="545" y="400" width="9" height="8" fill="#ff0000"/>
<rect x="545" y="419" width="9" height="9" fill="#ff0000"/>
<rect x="543.5" y="398.5" width="13" height="32" stroke="#ffff00" stroke-width="1" fill="none"/>
<rect x="508.5" y="434.5" width="12" height="13" stroke="#008000" stroke-width="1" fill="none"/>
<rect x="599.5" y="393.5" width="116" height="59" stroke="#008000" stroke-width="1" fill="none"/>
<polyline points="600.5,408.5 715.5,408.5 715.5,437.5 600.5,437.5 600.5,408.5" stroke="#ffff00" stroke-width="1" fill="none" stroke-linecap="square"/>
<polyline points="614.5,408.5 614.5,437.5" stroke="#ffff00" stroke-width="1" fill="none" stroke-linecap="square"/>
<polyline points="615.5,408.5 615.5,437.5" stroke="#008000" stroke-width="1" fill="none" stroke-linecap="square"/>
<polyline points="629.5,408.5 629.5,437.5" stroke="#ffff00" stroke-width="1" fill="none" stroke-linecap="square"/>
<rect x="711.5" y="415.5" width="4" height="15" stroke="#ffff00" stroke-width="1" fill="none"/>
<rect x="613" y="458" width="8" height="8" fill="#ff0000"/>
<rect x="631" y="458" width="9" height="8" fill="#ff0000"/>
<rect x="645" y="458" width="9" height="8" fill="#ff0000"/>
<rect x="664" y="458" width="8" height="8" fill="#ff0000"/>
<rect x="677" y="458" width="9" height="8" fill="#ff0000"/>
<rect x="696" y="458" width="9" height="8" fill="#ff0000"/>
<rect x="611.5" y="456.5" width="31" height="12" stroke="#ffff00" stroke-width="1" fill="none"/>
<rect x="643.5" y="456.5" width="31" height="12" stroke="#ffff00" stroke-width="1" fill="none"/>
<rect x="675.5" y="456.5" width="32" height="12" stroke="#ffff00" stroke-width="1" fill="none"/>
<rect x="721" y="393" width="9" height="9" fill="#ff0000"/>
<rect x="721" y="412" width="9" height="8" fill="#ff0000"/>
<rect x="721" y="425" width="9" height="8" fill="#ff0000"/>
<rect x="721" y="443" width="9" height="9" fill="#ff0000"/>
<rect x="719.5" y="391.5" width="13" height="63" stroke="#ffff00" stroke-width="1" fill="none"/>
<polyline points="719.5,423.5 732.5,423.5" stroke="#ffff00" stroke-width="1" fill="none" stroke-linecap="square"/>
<rect x="700.5" y="280.5" width="15" height="77" stroke="#008000" stroke-width="1" fill="none"/>
<rect x="700.5" y="304.5" width="15" height="29" stroke="#ffff00" stroke-width="1" fill="none"/>
<polyline points="700.5,311.5 715.5,311.5" stroke="#ffff00" stroke-width="1" fill="none" stroke-linecap="square"/>
<polyline points="707.5,295.5 707.5,304.5" stroke="#ffff00" stroke-width="1" fill="none" stroke-linecap="square"/>
<polyline points="707.5,333.5 707.5,341.5" stroke="#ffff00" stroke-width="1" fill="none" stroke-linecap="square"/>
<rect x="718.5" y="269.5" width="30" height="120" stroke="#008000" stroke-width="1" fill="none"/>
<polyline points="725.5,279.5 725.5,270.5 740.5,270.5" stroke="#ffff00" stroke-width="1" fill="none" stroke-linecap="square"/>
<polyline points="740.5,270.5 740.5,279.5" stroke="#ffffff" stroke-width="1" fill="none" stroke-linecap="square"/>
<polyline points="733.5,387.5 718.5,387.5 718.5,279.5 735.5,279.5" stroke="#ffff00" stroke-width="1" fill="none" stroke-linecap="square"/>
<polyline points="747.5,280.5 747.5,387.5" stroke="#ffff00" stroke-width="1" fill="none" stroke-linecap="square"/>
<rect x="760.5" y="275.5" width="46" height="82" stroke="#008000" stroke-width="1" fill="none"/>
<rect x="761.5" y="312.5" width="44" height="14" stroke="#ffff00" stroke-width="1" fill="none"/>
<polyline points="768.5,275.5 768.5,285.5" stroke="#ffff00" stroke-width="1" fill="none" stroke-linecap="square"/>
<polyline points="768.5,287.5 768.5,310.5" stroke="#ffffff" stroke-width="1" fill="none" stroke-linecap="square"/>
<polyline points="797.5,275.5 797.5,312.5" stroke="#ffff00" stroke-width="1" fill="none" stroke-linecap="square"/>
<rect x="766.5" y="379.5" width="41" height="27" stroke="#008000" stroke-width="1" fill="none"/>
<path d="M797.24,379.5 A15.3,15.3 0 1 1 775.36,379.5" stroke="#ffff00" fill="none"/>
<rect x="781" y="368" width="9" height="9" fill="#ff0000"/>
<rect x="800" y="368" width="9" height="9" fill="#ff0000"/>
<rect x="779.5" y="366.5" width="32" height="13" stroke="#ffff00" stroke-width="1" fill="none"/>
<rect x="807.5" y="320.5" width="73" height="73" stroke="#008000" stroke-width="1" fill="none"/>
<circle cx="844.2" cy="356" r="35.5" stroke="#ffff00" stroke-width="1" fill="none"/>
<circle cx="327.5" cy="286.5" r="4.7" fill="#ff80ff"/>
<circle cx="359.6" cy="286.5" r="4.7" fill="#ff80ff"/>
<circle cx="327.5" cy="322" r="4.7" fill="#ff80ff"/>
<circle cx="359.6" cy="322" r="4.7" fill="#ff80ff"/>
<circle cx="327.5" cy="426.5" r="4.7" fill="#ff80ff"/>
<circle cx="327.5" cy="462.5" r="4.7" fill="#ff80ff"/>
<circle cx="356.7" cy="426.5" r="4.7" fill="#ff80ff"/>
<circle cx="356.7" cy="462.5" r="4.7" fill="#ff80ff"/>
<circle cx="384.9" cy="426.5" r="4.7" fill="#ff80ff"/>
<circle cx="384.9" cy="462.5" r="4.7" fill="#ff80ff"/>
<circle cx="413.6" cy="426.5" r="4.7" fill="#ff80ff"/>
<circle cx="413.6" cy="462.5" r="4.7" fill="#ff80ff"/>
<circle cx="445.5" cy="286" r="10.1" fill="#808080"/>
<circle cx="445.5" cy="286" r="8" fill="#ff80ff"/>
<circle cx="869.1" cy="286" r="10.1" fill="#808080"/>
<circle cx="869.1" cy="286" r="8" fill="#ff80ff"/>
<circle cx="445.5" cy="462" r="10.1" fill="#808080"/>
<circle cx="445.5" cy="462" r="8" fill="#ff80ff"/>
<circle cx="869.1" cy="462" r="10.1" fill="#808080"/>
<circle cx="869.1" cy="462" r="8" fill="#ff80ff"/>
<circle cx="391.6" cy="285.9" r="6.3" fill="#808080"/>
<circle cx="391.6" cy="285.9" r="5.7" fill="#ff80ff"/>
<circle cx="391.6" cy="300.4" r="6.3" fill="#808080"/>
<circle cx="391.6" cy="300.4" r="5.7" fill="#ff80ff"/>
<rect x="385" y="308" width="13" height="14" fill="#808080"/>
<rect x="386" y="309" width="11" height="11" fill="#ff80ff"/>
<circle cx="356.4" cy="345.4" r="10.4" fill="#808080"/>
<circle cx="356.4" cy="345.4" r="9.9" fill="#ff80ff"/>
<circle cx="356.4" cy="402.4" r="10.4" fill="#808080"/>
<circle cx="356.4" cy="402.4" r="9.9" fill="#ff80ff"/>
<circle cx="392.4" cy="355.7" r="5.45" fill="#808080"/>
<circle cx="392.4" cy="355.7" r="3.95" fill="#ff80ff"/>
<circle cx="406.6" cy="362.9" r="5.45" fill="#808080"/>
<circle cx="406.6" cy="362.9" r="3.95" fill="#ff80ff"/>
<circle cx="392.4" cy="370.05" r="5.45" fill="#808080"/>
<circle cx="392.4" cy="370.05" r="3.95" fill="#ff80ff"/>
<circle cx="406.6" cy="377.3" r="5.45" fill="#808080"/>
<circle cx="406.6" cy="377.3" r="3.95" fill="#ff80ff"/>
<circle cx="392.4" cy="384.4" r="5.45" fill="#808080"/>
<circle cx="392.4" cy="384.4" r="3.95" fill="#ff80ff"/>
<rect x="401" y="386" width="11" height="11" fill="#808080"/>
<rect x="402" y="387" width="9" height="8" fill="#ff80ff"/>
<rect x="472" y="281" width="11" height="11" fill="#808080"/>
<rect x="473" y="282" width="9" height="8" fill="#ff80ff"/>
<rect x="601" y="281" width="11" height="11" fill="#808080"/>
<rect x="602" y="282" width="9" height="8" fill="#ff80ff"/>
<circle cx="492.3" cy="286.3" r="5.45" fill="#808080"/>
<circle cx="492.3" cy="286.3" r="3.95" fill="#ff80ff"/>
<circle cx="506.65" cy="286.3" r="5.45" fill="#808080"/>
<circle cx="506.65" cy="286.3" r="3.95" fill="#ff80ff"/>
<circle cx="521" cy="286.3" r="5.45" fill="#808080"/>
<circle cx="521" cy="286.3" r="3.95" fill="#ff80ff"/>
<circle cx="535.35" cy="286.3" r="5.45" fill="#808080"/>
<circle cx="535.35" cy="286.3" r="3.95" fill="#ff80ff"/>
<circle cx="549.7" cy="286.3" r="5.45" fill="#808080"/>
<circle cx="549.7" cy="286.3" r="3.95" fill="#ff80ff"/>
<circle cx="564.05" cy="286.3" r="5.45" fill="#808080"/>
<circle cx="564.05" cy="286.3" r="3.95" fill="#ff80ff"/>
<circle cx="578.4" cy="286.3" r="5.45" fill="#808080"/>
<circle cx="578.4" cy="286.3" r="3.95" fill="#ff80ff"/>
<circle cx="592.75" cy="286.3" r="5.45" fill="#808080"/>
<circle cx="592.75" cy="286.3" r="3.95" fill="#ff80ff"/>
<circle cx="621.45" cy="286.3" r="5.45" fill="#808080"/>
<circle cx="621.45" cy="286.3" r="3.95" fill="#ff80ff"/>
<circle cx="635.8" cy="286.3" r="5.45" fill="#808080"/>
<circle cx="635.8" cy="286.3" r="3.95" fill="#ff80ff"/>
<circle cx="650.15" cy="286.3" r="5.45" fill="#808080"/>
<circle cx="650.15" cy="286.3" r="3.95" fill="#ff80ff"/>
<circle cx="664.5" cy="286.3" r="5.45" fill="#808080"/>
<circle cx="664.5" cy="286.3" r="3.95" fill="#ff80ff"/>
<circle cx="678.85" cy="286.3" r="5.45" fill="#808080"/>
<circle cx="678.85" cy="286.3" r="3.95" fill="#ff80ff"/>
<circle cx="693.2" cy="286.3" r="5.45" fill="#808080"/>
<circle cx="693.2" cy="286.3" r="3.95" fill="#ff80ff"/>
<rect x="702" y="281" width="11" height="11" fill="#808080"/>
<rect x="703" y="282" width="9" height="8" fill="#ff80ff"/>
<circle cx="506.5" cy="304.2" r="4.75" fill="#808080"/>
<circle cx="506.5" cy="304.2" r="3.25" fill="#ff80ff"/>
<circle cx="449.25" cy="339.9" r="5.45" fill="#808080"/>
<circle cx="449.25" cy="339.9" r="3.95" fill="#ff80ff"/>
<circle cx="449.25" cy="383.1" r="5.45" fill="#808080"/>
<circle cx="449.25" cy="383.1" r="3.95" fill="#ff80ff"/>
<circle cx="463.6" cy="339.9" r="5.45" fill="#808080"/>
<circle cx="463.6" cy="339.9" r="3.95" fill="#ff80ff"/>
<circle cx="463.6" cy="383.1" r="5.45" fill="#808080"/>
<circle cx="463.6" cy="383.1" r="3.95" fill="#ff80ff"/>
<circle cx="477.95" cy="339.9" r="5.45" fill="#808080"/>
<circle cx="477.95" cy="339.9" r="3.95" fill="#ff80ff"/>
<circle cx="477.95" cy="383.1" r="5.45" fill="#808080"/>
<circle cx="477.95" cy="383.1" r="3.95" fill="#ff80ff"/>
<circle cx="492.3" cy="339.9" r="5.45" fill="#808080"/>
<circle cx="492.3" cy="339.9" r="3.95" fill="#ff80ff"/>
<circle cx="492.3" cy="383.1" r="5.45" fill="#808080"/>
<circle cx="492.3" cy="383.1" r="3.95" fill="#ff80ff"/>
<circle cx="506.65" cy="339.9" r="5.45" fill="#808080"/>
<circle cx="506.65" cy="339.9" r="3.95" fill="#ff80ff"/>
<circle cx="506.65" cy="383.1" r="5.45" fill="#808080"/>
<circle cx="506.65" cy="383.1" r="3.95" fill="#ff80ff"/>
<circle cx="521" cy="339.9" r="5.45" fill="#808080"/>
<circle cx="521" cy="339.9" r="3.95" fill="#ff80ff"/>
<circle cx="521" cy="383.1" r="5.45" fill="#808080"/>
<circle cx="521" cy="383.1" r="3.95" fill="#ff80ff"/>
<circle cx="535.35" cy="339.9" r="5.45" fill="#808080"/>
<circle cx="535.35" cy="339.9" r="3.95" fill="#ff80ff"/>
<circle cx="535.35" cy="383.1" r="5.45" fill="#808080"/>
<circle cx="535.35" cy="383.1" r="3.95" fill="#ff80ff"/>
<circle cx="549.7" cy="339.9" r="5.45" fill="#808080"/>
<circle cx="549.7" cy="339.9" r="3.95" fill="#ff80ff"/>
<circle cx="549.7" cy="383.1" r="5.45" fill="#808080"/>
<circle cx="549.7" cy="383.1" r="3.95" fill="#ff80ff"/>
<circle cx="564.05" cy="339.9" r="5.45" fill="#808080"/>
<circle cx="564.05" cy="339.9" r="3.95" fill="#ff80ff"/>
<circle cx="564.05" cy="383.1" r="5.45" fill="#808080"/>
<circle cx="564.05" cy="383.1" r="3.95" fill="#ff80ff"/>
<circle cx="578.4" cy="339.9" r="5.45" fill="#808080"/>
<circle cx="578.4" cy="339.9" r="3.95" fill="#ff80ff"/>
<circle cx="578.4" cy="383.1" r="5.45" fill="#808080"/>
<circle cx="578.4" cy="383.1" r="3.95" fill="#ff80ff"/>
<circle cx="592.75" cy="339.9" r="5.45" fill="#808080"/>
<circle cx="592.75" cy="339.9" r="3.95" fill="#ff80ff"/>
<circle cx="592.75" cy="383.1" r="5.45" fill="#808080"/>
<circle cx="592.75" cy="383.1" r="3.95" fill="#ff80ff"/>
<circle cx="607.1" cy="339.9" r="5.45" fill="#808080"/>
<circle cx="607.1" cy="339.9" r="3.95" fill="#ff80ff"/>
<circle cx="607.1" cy="383.1" r="5.45" fill="#808080"/>
<circle cx="607.1" cy="383.1" r="3.95" fill="#ff80ff"/>
<circle cx="621.45" cy="339.9" r="5.45" fill="#808080"/>
<circle cx="621.45" cy="339.9" r="3.95" fill="#ff80ff"/>
<circle cx="621.45" cy="383.1" r="5.45" fill="#808080"/>
<circle cx="621.45" cy="383.1" r="3.95" fill="#ff80ff"/>
<circle cx="635.8" cy="339.9" r="5.45" fill="#808080"/>
<circle cx="635.8" cy="339.9" r="3.95" fill="#ff80ff"/>
<rect x="630" y="378" width="11" height="11" fill="#808080"/>
<rect x="631" y="379" width="9" height="8" fill="#ff80ff"/>
<circle cx="492.3" cy="401" r="4.7" fill="#ff80ff"/>
<circle cx="506.65" cy="401" r="4.7" fill="#ff80ff"/>
<circle cx="521" cy="401" r="4.7" fill="#ff80ff"/>
<circle cx="535.35" cy="401" r="4.7" fill="#ff80ff"/>
<circle cx="499.6" cy="422.3" r="5.25" fill="#808080"/>
<circle cx="499.6" cy="422.3" r="3.75" fill="#ff80ff"/>
<circle cx="513.8" cy="422.3" r="5.25" fill="#808080"/>
<circle cx="513.8" cy="422.3" r="3.75" fill="#ff80ff"/>
<rect x="523" y="417" width="10" height="11" fill="#808080"/>
<rect x="524" y="418" width="8" height="8" fill="#ff80ff"/>
<circle cx="514" cy="440.3" r="4.4" fill="#ff80ff"/>
<circle cx="607.1" cy="401" r="5.45" fill="#808080"/>
<circle cx="607.1" cy="401" r="3.95" fill="#ff80ff"/>
<circle cx="607.1" cy="444" r="5.45" fill="#808080"/>
<circle cx="607.1" cy="444" r="3.95" fill="#ff80ff"/>
<circle cx="621.45" cy="401" r="5.45" fill="#808080"/>
<circle cx="621.45" cy="401" r="3.95" fill="#ff80ff"/>
<circle cx="621.45" cy="444" r="5.45" fill="#808080"/>
<circle cx="621.45" cy="444" r="3.95" fill="#ff80ff"/>
<circle cx="635.8" cy="401" r="5.45" fill="#808080"/>
<circle cx="635.8" cy="401" r="3.95" fill="#ff80ff"/>
<circle cx="635.8" cy="444" r="5.45" fill="#808080"/>
<circle cx="635.8" cy="444" r="3.95" fill="#ff80ff"/>
<circle cx="650.15" cy="401" r="5.45" fill="#808080"/>
<circle cx="650.15" cy="401" r="3.95" fill="#ff80ff"/>
<circle cx="650.15" cy="444" r="5.45" fill="#808080"/>
<circle cx="650.15" cy="444" r="3.95" fill="#ff80ff"/>
<circle cx="664.5" cy="401" r="5.45" fill="#808080"/>
<circle cx="664.5" cy="401" r="3.95" fill="#ff80ff"/>
<circle cx="664.5" cy="444" r="5.45" fill="#808080"/>
<circle cx="664.5" cy="444" r="3.95" fill="#ff80ff"/>
<circle cx="678.85" cy="401" r="5.45" fill="#808080"/>
<circle cx="678.85" cy="401" r="3.95" fill="#ff80ff"/>
<circle cx="678.85" cy="444" r="5.45" fill="#808080"/>
<circle cx="678.85" cy="444" r="3.95" fill="#ff80ff"/>
<circle cx="693.2" cy="401" r="5.45" fill="#808080"/>
<circle cx="693.2" cy="401" r="3.95" fill="#ff80ff"/>
<circle cx="693.2" cy="444" r="5.45" fill="#808080"/>
<circle cx="693.2" cy="444" r="3.95" fill="#ff80ff"/>
<circle cx="707.55" cy="401" r="5.45" fill="#808080"/>
<circle cx="707.55" cy="401" r="3.95" fill="#ff80ff"/>
<rect x="702" y="439" width="11" height="11" fill="#808080"/>
<rect x="703" y="440" width="9" height="8" fill="#ff80ff"/>
<circle cx="607.1" cy="415.4" r="4.8" fill="#808080"/>
<circle cx="607.1" cy="415.4" r="4.3" fill="#ff80ff"/>
<circle cx="607.1" cy="429.8" r="4.8" fill="#808080"/>
<circle cx="607.1" cy="429.8" r="4.3" fill="#ff80ff"/>
<circle cx="621.45" cy="415.4" r="4.8" fill="#808080"/>
<circle cx="621.45" cy="415.4" r="4.3" fill="#ff80ff"/>
<circle cx="621.45" cy="429.8" r="4.8" fill="#808080"/>
<circle cx="621.45" cy="429.8" r="4.3" fill="#ff80ff"/>
<circle cx="707.3" cy="350.5" r="5" fill="#808080"/>
<circle cx="707.3" cy="350.5" r="3.5" fill="#ff80ff"/>
<circle cx="739.6" cy="283" r="4.7" fill="#808080"/>
<circle cx="739.6" cy="283" r="4.1" fill="#ff80ff"/>
<circle cx="725.5" cy="325.3" r="4.75" fill="#808080"/>
<circle cx="725.5" cy="325.3" r="3.25" fill="#ff80ff"/>
<rect x="735" y="378" width="10" height="10" fill="#808080"/>
<rect x="736" y="379" width="8" height="7" fill="#ff80ff"/>
<circle cx="768.6" cy="336.1" r="5.25" fill="#808080"/>
<circle cx="768.6" cy="336.1" r="3.75" fill="#ff80ff"/>
<circle cx="782.8" cy="336.1" r="5.25" fill="#808080"/>
<circle cx="782.8" cy="336.1" r="3.75" fill="#ff80ff"/>
<circle cx="797.2" cy="336.1" r="5.25" fill="#808080"/>
<circle cx="797.2" cy="336.1" r="3.75" fill="#ff80ff"/>
<circle cx="768.6" cy="350.5" r="5.25" fill="#808080"/>
<circle cx="768.6" cy="350.5" r="3.75" fill="#ff80ff"/>
<circle cx="782.8" cy="350.5" r="5.25" fill="#808080"/>
<circle cx="782.8" cy="350.5" r="3.75" fill="#ff80ff"/>
<rect x="792" y="345" width="11" height="11" fill="#808080"/>
<rect x="793" y="346" width="9" height="8" fill="#ff80ff"/>
<circle cx="768.6" cy="372.2" r="5" fill="#808080"/>
<circle cx="768.6" cy="372.2" r="3.5" fill="#ff80ff"/>
<rect x="767" y="385" width="10" height="10" fill="#808080"/>
<rect x="768" y="386" width="8" height="7" fill="#ff80ff"/>
<circle cx="786.3" cy="390.1" r="5" fill="#808080"/>
<circle cx="786.3" cy="390.1" r="3.5" fill="#ff80ff"/>
<circle cx="800.7" cy="390.1" r="5" fill="#808080"/>
<circle cx="800.7" cy="390.1" r="3.5" fill="#ff80ff"/>
<rect x="838" y="331" width="11" height="11" fill="#808080"/>
<rect x="839" y="332" width="9" height="8" fill="#ff80ff"/>
<circle cx="843.6" cy="375.7" r="5.25" fill="#808080"/>
<circle cx="843.6" cy="375.7" r="3.75" fill="#ff80ff"/>
<polyline points="514.5,423.5 514.5,439.5" stroke="#ffffff" stroke-width="1" fill="none" stroke-linecap="square"/>
<polyline points="698.5,286.5 703.5,286.5" stroke="#ff0000" stroke-width="3" fill="none" stroke-linecap="square"/>
<text x="446.5" y="289" fill="#006000" stroke="#006000" stroke-width="0.3" font-size="7.6" font-family="'DejaVu Sans Light','Liberation Mono',monospace" text-anchor="middle">1</text>
<text x="870.5" y="289" fill="#006000" stroke="#006000" stroke-width="0.3" font-size="7.6" font-family="'DejaVu Sans Light','Liberation Mono',monospace" text-anchor="middle">1</text>
<text x="446.5" y="465" fill="#006000" stroke="#006000" stroke-width="0.3" font-size="7.6" font-family="'DejaVu Sans Light','Liberation Mono',monospace" text-anchor="middle">1</text>
<text x="870.5" y="465" fill="#006000" stroke="#006000" stroke-width="0.3" font-size="7.6" font-family="'DejaVu Sans Light','Liberation Mono',monospace" text-anchor="middle">1</text>
<text x="344.6 349.35 354.1 358.85 363.6 368.35" y="347.3" fill="#ffffff" stroke="#ffffff" stroke-width="0.45" font-size="7.8" font-family="'DejaVu Sans Light','Liberation Mono',monospace" text-anchor="middle">H<tspan fill="#008000" stroke="#008000">ole1</tspan>6</text>
<text x="344.6 349.35 354.1 358.85 363.6 368.35" y="404.3" fill="#ffffff" stroke="#ffffff" stroke-width="0.45" font-size="7.8" font-family="'DejaVu Sans Light','Liberation Mono',monospace" text-anchor="middle">H<tspan fill="#008000" stroke="#008000">ole1</tspan>5</text>
<polyline points="432.5,209.5 432.5,261.5" stroke="#ff00ff" stroke-width="1" fill="none" stroke-linecap="square"/>
<polyline points="885.5,209.5 885.5,242.5" stroke="#ff00ff" stroke-width="1" fill="none" stroke-linecap="square"/>
<polyline points="478.5,230.5 478.5,261.5" stroke="#ff00ff" stroke-width="1" fill="none" stroke-linecap="square"/>
<polyline points="432.5,224.5 633.5,224.5" stroke="#ff00ff" stroke-width="1" fill="none" stroke-linecap="square"/>
<polyline points="685.5,224.5 885.5,224.5" stroke="#ff00ff" stroke-width="1" fill="none" stroke-linecap="square"/>
<line x1="433" y1="224.5" x2="439.5" y2="221.3" stroke="#ff00ff" stroke-width="1"/>
<line x1="433" y1="224.5" x2="439.5" y2="227.7" stroke="#ff00ff" stroke-width="1"/>
<line x1="885" y1="224.5" x2="878.5" y2="227.7" stroke="#ff00ff" stroke-width="1"/>
<line x1="885" y1="224.5" x2="878.5" y2="221.3" stroke="#ff00ff" stroke-width="1"/>
<line x1="433" y1="246.5" x2="439.5" y2="243.3" stroke="#ff00ff" stroke-width="1"/>
<line x1="433" y1="246.5" x2="439.5" y2="249.7" stroke="#ff00ff" stroke-width="1"/>
<line x1="478" y1="246.5" x2="471.5" y2="249.7" stroke="#ff00ff" stroke-width="1"/>
<line x1="478" y1="246.5" x2="471.5" y2="243.3" stroke="#ff00ff" stroke-width="1"/>
<text x="644.66 652.3 659.94 667.58 675.22" y="229.8" fill="#ff00ff" stroke="#ff00ff" stroke-width="0.45" font-size="12.3" font-family="'DejaVu Sans Light','Liberation Mono',monospace" text-anchor="middle">80.05</text>
<text x="445.19 452.09 458.99 465.89" y="250.2" fill="#ff00ff" stroke="#ff00ff" stroke-width="0.45" font-size="11" font-family="'DejaVu Sans Light','Liberation Mono',monospace" text-anchor="middle">8.01</text>
<polyline points="445.5,483.5 445.5,514.5" stroke="#ff00ff" stroke-width="1" fill="none" stroke-linecap="square"/>
<polyline points="869.5,483.5 869.5,514.5" stroke="#ff00ff" stroke-width="1" fill="none" stroke-linecap="square"/>
<polyline points="445.5,498.5 631.5,498.5" stroke="#ff00ff" stroke-width="1" fill="none" stroke-linecap="square"/>
<polyline points="684.5,498.5 869.5,498.5" stroke="#ff00ff" stroke-width="1" fill="none" stroke-linecap="square"/>
<line x1="446" y1="498.5" x2="452.5" y2="495.3" stroke="#ff00ff" stroke-width="1"/>
<line x1="446" y1="498.5" x2="452.5" y2="501.7" stroke="#ff00ff" stroke-width="1"/>
<line x1="869" y1="498.5" x2="862.5" y2="501.7" stroke="#ff00ff" stroke-width="1"/>
<line x1="869" y1="498.5" x2="862.5" y2="495.3" stroke="#ff00ff" stroke-width="1"/>
<text x="643.43 650.97 658.51 666.05 673.59" y="503" fill="#ff00ff" stroke="#ff00ff" stroke-width="0.45" font-size="11.6" font-family="'DejaVu Sans Light','Liberation Mono',monospace" text-anchor="middle">74.98</text>
<polyline points="311.5,504.5 311.5,535.5" stroke="#ffff00" stroke-width="1" fill="none" stroke-linecap="square"/>
<polyline points="885.5,504.5 885.5,535.5" stroke="#ffff00" stroke-width="1" fill="none" stroke-linecap="square"/>
<polyline points="311.5,519.5 574.5,519.5" stroke="#ffff00" stroke-width="1" fill="none" stroke-linecap="square"/>
<polyline points="622.5,519.5 885.5,519.5" stroke="#ffff00" stroke-width="1" fill="none" stroke-linecap="square"/>
<line x1="312" y1="519.5" x2="318.5" y2="516.3" stroke="#ffff00" stroke-width="1"/>
<line x1="312" y1="519.5" x2="318.5" y2="522.7" stroke="#ffff00" stroke-width="1"/>
<line x1="885" y1="519.5" x2="878.5" y2="522.7" stroke="#ffff00" stroke-width="1"/>
<line x1="885" y1="519.5" x2="878.5" y2="516.3" stroke="#ffff00" stroke-width="1"/>
<text x="586.33 594.41 602.49 610.57" y="523.9" fill="#ffff00" stroke="#ffff00" stroke-width="0.45" font-size="11" font-family="'DejaVu Sans Light','Liberation Mono',monospace" text-anchor="middle">4000</text>
<polyline points="275.5,266.5 306.5,266.5" stroke="#ffff00" stroke-width="1" fill="none" stroke-linecap="square"/>
<polyline points="275.5,481.5 306.5,481.5" stroke="#ffff00" stroke-width="1" fill="none" stroke-linecap="square"/>
<polyline points="291.5,266.5 291.5,352.5" stroke="#ffff00" stroke-width="1" fill="none" stroke-linecap="square"/>
<polyline points="291.5,395.5 291.5,481.5" stroke="#ffff00" stroke-width="1" fill="none" stroke-linecap="square"/>
<line x1="291.5" y1="267" x2="294.7" y2="273.5" stroke="#ffff00" stroke-width="1"/>
<line x1="291.5" y1="267" x2="288.3" y2="273.5" stroke="#ffff00" stroke-width="1"/>
<line x1="291.5" y1="481" x2="288.3" y2="474.5" stroke="#ffff00" stroke-width="1"/>
<line x1="291.5" y1="481" x2="294.7" y2="474.5" stroke="#ffff00" stroke-width="1"/>
<text x="-10.72 -3.57 3.58 10.73" y="0" fill="#ffff00" stroke="#ffff00" stroke-width="0.1" font-size="10.8" font-family="'DejaVu Sans Light','Liberation Mono',monospace" text-anchor="middle" transform="translate(296,373) rotate(-90)">1501</text>
<rect x="374" y="541" width="535" height="259" stroke="#ff0000" stroke-width="2" fill="none"/>
<polyline points="374.5,569.5 908.5,569.5" stroke="#ff0000" stroke-width="1" fill="none" stroke-linecap="square"/>
<polyline points="374.5,598.5 908.5,598.5" stroke="#ff0000" stroke-width="1" fill="none" stroke-linecap="square"/>
<polyline points="374.5,620.5 908.5,620.5" stroke="#ff0000" stroke-width="1" fill="none" stroke-linecap="square"/>
<polyline points="374.5,641.5 908.5,641.5" stroke="#ff0000" stroke-width="1" fill="none" stroke-linecap="square"/>
<polyline points="374.5,662.5 908.5,662.5" stroke="#ff0000" stroke-width="1" fill="none" stroke-linecap="square"/>
<polyline points="374.5,684.5 908.5,684.5" stroke="#ff0000" stroke-width="1" fill="none" stroke-linecap="square"/>
<polyline points="374.5,706.5 908.5,706.5" stroke="#ff0000" stroke-width="1" fill="none" stroke-linecap="square"/>
<polyline points="374.5,728.5 908.5,728.5" stroke="#ff0000" stroke-width="1" fill="none" stroke-linecap="square"/>
<polyline points="374.5,749.5 908.5,749.5" stroke="#ff0000" stroke-width="1" fill="none" stroke-linecap="square"/>
<polyline points="374.5,771.5 908.5,771.5" stroke="#ff0000" stroke-width="1" fill="none" stroke-linecap="square"/>
<polyline points="427.5,569.5 427.5,771.5" stroke="#ff0000" stroke-width="1" fill="none" stroke-linecap="square"/>
<polyline points="426.5,569.5 426.5,771.5" stroke="#ff0000" stroke-width="1" fill="none" stroke-linecap="square"/>
<polyline points="374.5,570.5 908.5,570.5" stroke="#ff0000" stroke-width="1" fill="none" stroke-linecap="square"/>
<polyline points="547.5,569.5 547.5,771.5" stroke="#ff0000" stroke-width="1" fill="none" stroke-linecap="square"/>
<polyline points="663.5,569.5 663.5,799.5" stroke="#ff0000" stroke-width="1" fill="none" stroke-linecap="square"/>
<polyline points="743.5,569.5 743.5,799.5" stroke="#ff0000" stroke-width="1" fill="none" stroke-linecap="square"/>
<text x="668.02 683.26 698.49 713.72 728.95" y="561.3" fill="#ff0000" stroke="#ff0000" stroke-width="0.45" font-size="20.6" font-family="'DejaVu Sans Light','Liberation Mono',monospace" text-anchor="middle" transform="scale(0.86,1)">DRILL</text>
<text x="762.91 778.14 793.37 808.6 823.84" y="561.3" fill="#ff0000" stroke="#ff0000" stroke-width="0.45" font-size="20.6" font-family="'DejaVu Sans Light','Liberation Mono',monospace" text-anchor="middle" transform="scale(0.86,1)">CHART</text>
<text x="449.77 465 480.23" y="589.7" fill="#ff0000" stroke="#ff0000" stroke-width="0.45" font-size="20.6" font-family="'DejaVu Sans Light','Liberation Mono',monospace" text-anchor="middle" transform="scale(0.86,1)">SYM</text>
<text x="545 560.23 575.47 590.7" y="589.7" fill="#ff0000" stroke="#ff0000" stroke-width="0.45" font-size="20.6" font-family="'DejaVu Sans Light','Liberation Mono',monospace" text-anchor="middle" transform="scale(0.86,1)">DIAM</text>
<text x="689.88 705.12 720.35" y="589.7" fill="#ff0000" stroke="#ff0000" stroke-width="0.45" font-size="20.6" font-family="'DejaVu Sans Light','Liberation Mono',monospace" text-anchor="middle" transform="scale(0.86,1)">TOL</text>
<text x="802.44 817.67 832.91" y="589.7" fill="#ff0000" stroke="#ff0000" stroke-width="0.45" font-size="20.6" font-family="'DejaVu Sans Light','Liberation Mono',monospace" text-anchor="middle" transform="scale(0.86,1)">QTY</text>
<text x="936.74 951.98 967.21 982.44" y="589.7" fill="#ff0000" stroke="#ff0000" stroke-width="0.45" font-size="20.6" font-family="'DejaVu Sans Light','Liberation Mono',monospace" text-anchor="middle" transform="scale(0.86,1)">NOTE</text>
<text x="573.37 588.6 603.84 619.07 634.3" y="790.2" fill="#ff0000" stroke="#ff0000" stroke-width="0.45" font-size="20.6" font-family="'DejaVu Sans Light','Liberation Mono',monospace" text-anchor="middle" transform="scale(0.86,1)">TOTAL</text>
<text x="818.6 833.84 849.07" y="790.2" fill="#ff0000" stroke="#ff0000" stroke-width="0.45" font-size="20.6" font-family="'DejaVu Sans Light','Liberation Mono',monospace" text-anchor="middle" transform="scale(0.86,1)">117</text>
<text x="493.1 502.45 511.8 521.15 530.5" y="612.8" fill="#ff0000" stroke="#ff0000" stroke-width="0.45" font-size="13.2" font-family="'DejaVu Sans Light','Liberation Mono',monospace" text-anchor="middle">0.028</text>
<text x="558.6 567.95" y="612.8" fill="#ff0000" stroke="#ff0000" stroke-width="0.45" font-size="13.2" font-family="'DejaVu Sans Light','Liberation Mono',monospace" text-anchor="middle">+8</text>
<text x="725.1" y="612.8" fill="#ff0000" stroke="#ff0000" stroke-width="0.45" font-size="13.2" font-family="'DejaVu Sans Light','Liberation Mono',monospace" text-anchor="middle">2</text>
<text x="754.7 764.05 773.4 782.75 792.1" y="612.8" fill="#ff0000" stroke="#ff0000" stroke-width="0.45" font-size="13.2" font-family="'DejaVu Sans Light','Liberation Mono',monospace" text-anchor="middle">0,9<tspan font-size="10.3">mm</tspan></text>
<line x1="397" y1="606.4" x2="404" y2="613.4" stroke="#ff0000" stroke-width="1"/>
<line x1="397" y1="613.4" x2="404" y2="606.4" stroke="#ff0000" stroke-width="1"/>
<text x="493.1 502.45 511.8 521.15 530.5" y="633.9" fill="#ff0000" stroke="#ff0000" stroke-width="0.45" font-size="13.2" font-family="'DejaVu Sans Light','Liberation Mono',monospace" text-anchor="middle">0.031</text>
<text x="558.6 567.95" y="633.9" fill="#ff0000" stroke="#ff0000" stroke-width="0.45" font-size="13.2" font-family="'DejaVu Sans Light','Liberation Mono',monospace" text-anchor="middle">+5</text>
<text x="715.75 725.1" y="633.9" fill="#ff0000" stroke="#ff0000" stroke-width="0.45" font-size="13.2" font-family="'DejaVu Sans Light','Liberation Mono',monospace" text-anchor="middle">14</text>
<text x="754.7 764.05 773.4 782.75 792.1" y="633.9" fill="#ff0000" stroke="#ff0000" stroke-width="0.45" font-size="13.2" font-family="'DejaVu Sans Light','Liberation Mono',monospace" text-anchor="middle">0,9<tspan font-size="10.3">mm</tspan></text>
<rect x="396.5" y="627.5" width="4" height="4" stroke="#ff0000" stroke-width="1" fill="none"/>
<rect x="400.5" y="631.5" width="4" height="3" stroke="#ff0000" stroke-width="1" fill="none"/>
<text x="493.1 502.45 511.8 521.15 530.5" y="655.3" fill="#ff0000" stroke="#ff0000" stroke-width="0.45" font-size="13.2" font-family="'DejaVu Sans Light','Liberation Mono',monospace" text-anchor="middle">0.034</text>
<text x="558.6 567.95" y="655.3" fill="#ff0000" stroke="#ff0000" stroke-width="0.45" font-size="13.2" font-family="'DejaVu Sans Light','Liberation Mono',monospace" text-anchor="middle">+2</text>
<text x="715.75 725.1" y="655.3" fill="#ff0000" stroke="#ff0000" stroke-width="0.45" font-size="13.2" font-family="'DejaVu Sans Light','Liberation Mono',monospace" text-anchor="middle">57</text>
<text x="754.7 764.05 773.4 782.75 792.1" y="655.3" fill="#ff0000" stroke="#ff0000" stroke-width="0.45" font-size="13.2" font-family="'DejaVu Sans Light','Liberation Mono',monospace" text-anchor="middle">0,9<tspan font-size="10.3">mm</tspan></text>
<path d="M396.5,652.4 l4,-3.5 l4,3.5 l-4,3.5 z" stroke="#ff0000" fill="none"/>
<text x="493.1 502.45 511.8 521.15 530.5" y="676.7" fill="#ff0000" stroke="#ff0000" stroke-width="0.45" font-size="13.2" font-family="'DejaVu Sans Light','Liberation Mono',monospace" text-anchor="middle">0.036</text>
<text x="558.6" y="676.7" fill="#ff0000" stroke="#ff0000" stroke-width="0.45" font-size="13.2" font-family="'DejaVu Sans Light','Liberation Mono',monospace" text-anchor="middle">0</text>
<text x="715.75 725.1" y="676.7" fill="#ff0000" stroke="#ff0000" stroke-width="0.45" font-size="13.2" font-family="'DejaVu Sans Light','Liberation Mono',monospace" text-anchor="middle">13</text>
<text x="754.7 764.05 773.4 782.75 792.1" y="676.7" fill="#ff0000" stroke="#ff0000" stroke-width="0.45" font-size="13.2" font-family="'DejaVu Sans Light','Liberation Mono',monospace" text-anchor="middle">0,9<tspan font-size="10.3">mm</tspan></text>
<polyline points="397.5,673.5 404.5,673.5" stroke="#ff0000" stroke-width="1" fill="none" stroke-linecap="square"/>
<polyline points="400.5,670.5 400.5,677.5" stroke="#ff0000" stroke-width="1" fill="none" stroke-linecap="square"/>
<text x="493.1 502.45 511.8 521.15 530.5" y="699" fill="#ff0000" stroke="#ff0000" stroke-width="0.45" font-size="13.2" font-family="'DejaVu Sans Light','Liberation Mono',monospace" text-anchor="middle">0.037</text>
<text x="558.6 567.95" y="699" fill="#ff0000" stroke="#ff0000" stroke-width="0.45" font-size="13.2" font-family="'DejaVu Sans Light','Liberation Mono',monospace" text-anchor="middle">-1</text>
<text x="715.75 725.1" y="699" fill="#ff0000" stroke="#ff0000" stroke-width="0.45" font-size="13.2" font-family="'DejaVu Sans Light','Liberation Mono',monospace" text-anchor="middle">22</text>
<text x="754.7 764.05 773.4 782.75 792.1" y="699" fill="#ff0000" stroke="#ff0000" stroke-width="0.45" font-size="13.2" font-family="'DejaVu Sans Light','Liberation Mono',monospace" text-anchor="middle">0,9<tspan font-size="10.3">mm</tspan></text>
<rect x="396.5" y="691.5" width="8" height="8" stroke="#ff0000" stroke-width="1" fill="none"/>
<line x1="397" y1="692.15" x2="404" y2="699.15" stroke="#ff0000" stroke-width="1"/>
<line x1="397" y1="699.15" x2="404" y2="692.15" stroke="#ff0000" stroke-width="1"/>
<text x="493.1 502.45 511.8 521.15 530.5" y="721.4" fill="#ff0000" stroke="#ff0000" stroke-width="0.45" font-size="13.2" font-family="'DejaVu Sans Light','Liberation Mono',monospace" text-anchor="middle">0.054</text>
<text x="558.6 567.95" y="721.4" fill="#ff0000" stroke="#ff0000" stroke-width="0.45" font-size="13.2" font-family="'DejaVu Sans Light','Liberation Mono',monospace" text-anchor="middle">-7</text>
<text x="725.1" y="721.4" fill="#ff0000" stroke="#ff0000" stroke-width="0.45" font-size="13.2" font-family="'DejaVu Sans Light','Liberation Mono',monospace" text-anchor="middle">3</text>
<text x="754.7 764.05 773.4 782.75 792.1" y="721.4" fill="#ff0000" stroke="#ff0000" stroke-width="0.45" font-size="13.2" font-family="'DejaVu Sans Light','Liberation Mono',monospace" text-anchor="middle">1,2<tspan font-size="10.3">mm</tspan></text>
<path d="M396.5,715.5 l8,5 v-5 l-8,5 z" stroke="#ff0000" fill="none"/>
<text x="493.1 502.45 511.8 521.15 530.5" y="742.3" fill="#ff0000" stroke="#ff0000" stroke-width="0.45" font-size="13.2" font-family="'DejaVu Sans Light','Liberation Mono',monospace" text-anchor="middle">0.110</text>
<text x="558.6 567.95 577.3" y="742.3" fill="#ff0000" stroke="#ff0000" stroke-width="0.45" font-size="13.2" font-family="'DejaVu Sans Light','Liberation Mono',monospace" text-anchor="middle">+16</text>
<text x="725.1" y="742.3" fill="#ff0000" stroke="#ff0000" stroke-width="0.45" font-size="13.2" font-family="'DejaVu Sans Light','Liberation Mono',monospace" text-anchor="middle">4</text>
<text x="754.7 764.05 773.4 782.75 792.1" y="742.3" fill="#ff0000" stroke="#ff0000" stroke-width="0.45" font-size="13.2" font-family="'DejaVu Sans Light','Liberation Mono',monospace" text-anchor="middle">3,2<tspan font-size="10.3">mm</tspan></text>
<ellipse cx="400.5" cy="739.65" rx="4" ry="3.5" stroke="#ff0000" fill="none"/>
<text x="493.1 502.45 511.8 521.15 530.5" y="763.9" fill="#ff0000" stroke="#ff0000" stroke-width="0.45" font-size="13.2" font-family="'DejaVu Sans Light','Liberation Mono',monospace" text-anchor="middle">0.128</text>
<text x="558.6 567.95" y="763.9" fill="#ff0000" stroke="#ff0000" stroke-width="0.45" font-size="13.2" font-family="'DejaVu Sans Light','Liberation Mono',monospace" text-anchor="middle">-2</text>
<text x="725.1" y="763.9" fill="#ff0000" stroke="#ff0000" stroke-width="0.45" font-size="13.2" font-family="'DejaVu Sans Light','Liberation Mono',monospace" text-anchor="middle">2</text>
<text x="754.7 764.05 773.4 782.75 792.1" y="763.9" fill="#ff0000" stroke="#ff0000" stroke-width="0.45" font-size="13.2" font-family="'DejaVu Sans Light','Liberation Mono',monospace" text-anchor="middle">3,2<tspan font-size="10.3">mm</tspan></text>
<path d="M396.5,762.4 h8 l-4,-3.5 z" stroke="#ff0000" fill="none"/>
</svg>
<div class="abs sb" style="left:1132px;top:110px;width:16px;height:712px"></div><div class="sbtn" style="left:1132px;top:110px;width:16px;height:16px"><svg width="14" height="14"><path d="M3,8.5 h8 l-4,-4 z" fill="#000"/></svg></div><div class="sbtn" style="left:1132px;top:806px;width:16px;height:16px"><svg width="14" height="14"><path d="M3,5 h8 l-4,4 z" fill="#000"/></svg></div><div class="sbtn" style="left:1132px;top:433px;width:16px;height:291px"></div><div class="abs sb" style="left:4px;top:822px;width:1128px;height:16px"></div><div class="sbtn" style="left:4px;top:822px;width:16px;height:16px"><svg width="14" height="14"><path d="M8.5,3 v8 l-4,-4 z" fill="#000"/></svg></div><div class="sbtn" style="left:1116px;top:822px;width:16px;height:16px"><svg width="14" height="14"><path d="M5.5,3 v8 l4,-4 z" fill="#000"/></svg></div><div class="sbtn" style="left:256px;top:822px;width:543px;height:16px"></div><svg class="abs" style="left:1132px;top:822px" width="18" height="16"><rect width="18" height="16" fill="#d4d0c8"/><path d="M4,16 L16,4 M8,16 L16,8 M12,16 L16,12" stroke="#808080" stroke-width="1.4"/><path d="M5,16 L16,5 M9,16 L16,9 M13,16 L16,13" stroke="#fff" stroke-width="0.8"/></svg><div id="status" class="abs"><span id="st">[-1750,2425]   RAM: 3276K Used, 1220681K Available</span></div></body></html>
